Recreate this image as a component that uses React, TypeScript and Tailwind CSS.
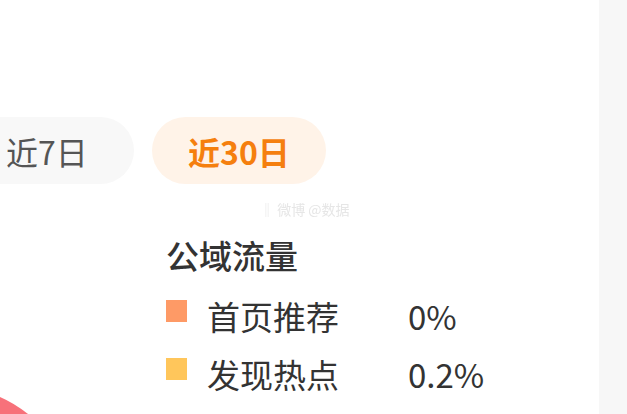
export default function App() {
  const rows = [
    { label: "首页推荐", value: "0%", color: "bg-[#fe9a66]" },
    { label: "发现热点", value: "0.2%", color: "bg-[#ffc65b]" },
  ]

  return (
    <div className="flex h-[414px] w-[627px] overflow-hidden bg-white font-['Noto_Sans_CJK_SC',sans-serif]">

      <div className="relative flex-1 overflow-hidden pt-[117px]">

        <div className="-ml-[40px] flex gap-[18px]">
          <div className="flex h-[67px] w-[174px] items-center justify-center rounded-full bg-[#f8f8f8] text-[32px] text-[#555]">
            近7日
          </div>
          <div className="flex h-[67px] w-[174px] items-center justify-center rounded-full bg-[#fff3e8] text-[32px] font-semibold text-[#f57f0e]">
            近30日
          </div>
        </div>

        <div className="ml-[260px] mt-[15px] h-[20px] text-[14px] leading-[20px] text-[#e6e6e6] blur-[0.6px]">
          ‖ 微博 @数据
        </div>

        <div className="ml-[166px] mt-[17px]">
          <div className="flex h-[40px] items-center text-[33px] font-medium text-[#333]">
            公域流量
          </div>
          <div className="mt-[12px]">
            {rows.map((row) => (
              <div key={row.label} className="flex h-[58px] items-center">
                <div className={`mb-[12px] h-[22px] w-[21px] ${row.color}`} />
                <div className="ml-[20px] w-[201px] text-[33px] text-[#333]">
                  {row.label}
                </div>
                <div className="text-[33px] text-[#333]">
                  {row.value}
                </div>
              </div>
            ))}
          </div>
        </div>

        {/* edge of the pie chart */}
        <svg className="absolute bottom-0 left-0" width="40" height="20" viewBox="0 0 40 20">
          <path d="M0 3 Q14 9 28 20 L0 20 Z" fill="#f7717a" />
        </svg>

      </div>

      <div className="w-[28px] bg-[#f7f7f7]" />

    </div>
  )
}
